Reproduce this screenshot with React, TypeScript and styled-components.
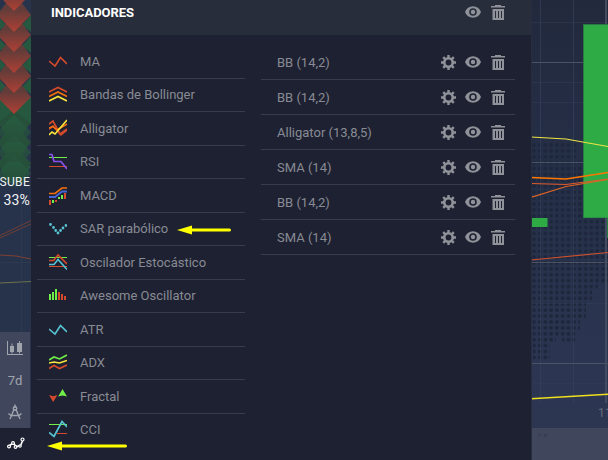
import React from "react";
import styled, { createGlobalStyle } from "styled-components";

const GlobalStyle = createGlobalStyle`
  * { box-sizing: border-box; }
  body { margin: 0; background: #1e2131; overflow: hidden; font-family: Roboto, sans-serif; }
  svg { display: block; flex: none; }
`;

const Screen = styled.div`
  position: relative;
  display: grid;
  grid-template-columns: 31px 500px 77px;
  width: 608px;
  height: 460px;
  overflow: hidden;
`;

const Sidebar = styled.aside`
  display: flex;
  flex-direction: column;
  height: 460px;
  position: relative;
  background: #27334b;
`;

const Sentiment = styled.div`
  position: absolute;
  top: 174px;
  right: 1px;
  text-align: right;
  color: #f1f2f4;
  white-space: nowrap;
`;
const SentimentLabel = styled.div`
  font-size: 12px;
  line-height: 16px;
  letter-spacing: 0.3px;
`;
const SentimentValue = styled.div`
  font-size: 14px;
  line-height: 20px;
  letter-spacing: 0.2px;
`;

const Tools = styled.nav`
  display: flex;
  flex-direction: column;
`;
const Tool = styled.button<{ $active?: boolean }>`
  display: flex;
  align-items: center;
  justify-content: center;
  width: ${(p) => (p.$active ? 31 : 30)}px;
  height: 32px;
  padding: 0;
  border: 0;
  font: 13px Roboto, sans-serif;
  color: ${(p) => (p.$active ? "#ffffff" : "#a0a4ad")};
  background: ${(p) => (p.$active ? "#1e2131" : "#40475d")};
`;

const Panel = styled.main`
  display: flex;
  flex-direction: column;
  background: #1e2131;
  color: #888b94;
  font-size: 13px;
`;
const Header = styled.header`
  display: flex;
  align-items: center;
  justify-content: space-between;
  height: 35px;
  padding: 0 25px 11px 20px;
  background: #282d3c;
`;
const Title = styled.h1`
  margin: 2px 0 0;
  font-size: 13px;
  line-height: 16px;
  font-weight: 700;
  letter-spacing: -0.05px;
  color: #fff;
`;
const Columns = styled.div`
  display: grid;
  grid-template-columns: 208px 254px;
  column-gap: 16px;
  padding: 10px 0 0 6px;
`;
const List = styled.ul`
  margin: 0;
  padding: 0;
  list-style: none;
`;
const IndicatorRow = styled.li`
  display: flex;
  align-items: center;
  gap: 13px;
  height: 34px;
  padding-left: 12px;
  border-bottom: 1px solid #383b49;
  &:nth-child(even) { height: 33px; padding-bottom: 1px; }
  &:last-child { border-bottom-color: transparent; }
`;
const ActiveRow = styled.li`
  display: flex;
  align-items: center;
  justify-content: space-between;
  height: 35px;
  padding: 0 9px 0 16px;
  border-bottom: 1px solid #383b49;
`;
const Actions = styled.div`
  display: flex;
  align-items: center;
  gap: 9px;
  color: #8f9299;
`;

const Chart = styled.section`
  height: 460px;
`;
const Annotation = styled.svg<{ $x: number; $y: number }>`
  position: absolute;
  left: ${(p) => p.$x}px;
  top: ${(p) => p.$y}px;
`;

const RED = "#d64a2c";
const ORANGE = "#f3700e";
const YELLOW = "#f8e63c";
const GREEN = "#70ef48";
const CYAN = "#57c4d4";
const BLUE = "#4467d8";
const PURPLE = "#8850ec";

const Line = ({ p, c, w = 1.6 }: { p: string; c: string; w?: number }) => (
  <polyline points={p} fill="none" stroke={c} strokeWidth={w} />
);

const zigzag = "0,9 6,14 11.5,5.5 18,12";

const glyphs: Record<string, React.ReactNode> = {
  ma: <Line p={zigzag} c={RED} />,
  bb: (
    <>
      <Line p="0,7 9,2.5 18,7" c={RED} />
      <Line p="0,11.5 9,7 18,11.5" c={ORANGE} />
      <Line p="0,16 9,11.5 18,16" c={YELLOW} />
    </>
  ),
  alligator: (
    <>
      <Line p="0,5 4,2 11,15 18,10" c={RED} />
      <Line p="0,10 4,7 12,16 18,11" c={RED} />
      <Line p="0,9 4,7.5 8,11 18,5" c={ORANGE} />
      <Line p="0,16 3,13 6,15 18,1" c={YELLOW} />
    </>
  ),
  rsi: (
    <>
      <path d="M0 5.5h18" stroke={GREEN} />
      <path d="M0 14.5h18" stroke={RED} />
      <Line p="0,2.5 3,2.5 5,9.5 12,9.5 18,17" c={PURPLE} w={1.7} />
    </>
  ),
  macd: (
    <>
      <Line p="0,7.5 6,7.5 13,2 18,2" c={ORANGE} />
      <Line p="0,11 6,11 13,5.5 18,5.5" c={BLUE} w={1.8} />
      <path d="M0 14h2v5H0zM6 14h2v2H6zM15 7h2v6h-2z" fill={RED} />
      <path d="M3 14h2v3H3zM9 11h2v2H9zM12 9h2v4h-2z" fill={GREEN} />
    </>
  ),
  sar: (
    <path
      d="M1.5 5.500h.01M4.500 8.500h.01M6.700 11.500h.01M9 14h.01M11.500 11.500h.01M14 9h.01M17 6.500h.01"
      stroke={CYAN}
      strokeWidth="2.800"
      strokeLinecap="round"
    />
  ),
  stochastic: (
    <>
      <path d="M0 4.500h18" stroke={GREEN} />
      <path d="M0 13.500h18" stroke={RED} />
      <Line p="0,7.5 4.5,7.5 9,2 18,11" c={RED} />
      <Line p="0,11.5 5,11.5 9,6.5 18,16.5" c={CYAN} />
    </>
  ),
  awesome: (
    <>
      <path d="M0 8h2v6H0zM3 6h2v8H3zM6 3h2v11H6z" fill={GREEN} />
      <path d="M9 6h2v8H9zM12 8h2v6h-2zM15 10h2v4h-2z" fill={RED} />
    </>
  ),
  atr: <Line p={zigzag} c={CYAN} />,
  adx: (
    <>
      <Line p="0,7 5,4 10.5,6 18,2" c={GREEN} />
      <Line p="0,10 5,9 10.5,10 18,7.5" c={YELLOW} />
      <Line p="0,15.5 5,12.5 10.5,15.5 18,12" c={RED} />
    </>
  ),
  fractal: (
    <>
      <path d="M0 8l4.2 1.2L8.4 8 4.2 15z" fill={RED} />
      <path d="M9.2 9.5L13.5 2l4.5 7.5-4.5-1z" fill={GREEN} />
    </>
  ),
  cci: (
    <>
      <path d="M0 4.500h18" stroke={GREEN} />
      <path d="M8 13.500h10" stroke={RED} />
      <Line p="0,12.5 5,16.5 13,1.5 18,7" c={CYAN} w={1.7} />
    </>
  ),
};

const indicators: [string, string][] = [
  ["ma", "MA"],
  ["bb", "Bandas de Bollinger"],
  ["alligator", "Alligator"],
  ["rsi", "RSI"],
  ["macd", "MACD"],
  ["sar", "SAR parabólico"],
  ["stochastic", "Oscilador Estocástico"],
  ["awesome", "Awesome Oscillator"],
  ["atr", "ATR"],
  ["adx", "ADX"],
  ["fractal", "Fractal"],
  ["cci", "CCI"],
];

const active = ["BB (14,2)", "BB (14,2)", "Alligator (13,8,5)", "SMA (14)", "BB (14,2)", "SMA (14)"];

const Gear = () => (
  <svg width="16" height="16" viewBox="0 0 16 16">
    <circle cx="8.500" cy="8.500" r="4.200" fill="none" stroke="currentColor" strokeWidth="2.600" />
    <path
      d="M8.500 1v3M8.500 13v3M1 8.500h3M13 8.500h3M3.200 3.200l2 2M11.800 11.800l2 2M3.200 13.800l2-2M11.800 5.200l2-2"
      stroke="currentColor"
      strokeWidth="2.400"
    />
  </svg>
);
const Eye = () => (
  <svg width="16" height="16" viewBox="0 0 16 16">
    <path
      fill="currentColor"
      fillRule="evenodd"
      d="M0 8C1.4 4.4 4.4 2.3 8 2.3S14.600 4.400 16 8c-1.400 3.600-4.400 5.700-8 5.700S1.400 11.600 0 8zm8-3.800a3.800 3.800 0 100 7.600 3.800 3.800 0 000-7.600zm0 1.600a2.200 2.200 0 110 4.400 2.200 2.200 0 010-4.400z"
    />
  </svg>
);
const Trash = () => (
  <svg width="16" height="16" viewBox="0 0 16 16">
    <path
      fill="currentColor"
      fillRule="evenodd"
      d="M5 1h6v1h4v1.500H1V2h4zM2.500 5h11.500v11H2.500zM5 7v7h1V7zM8 7v7h1V7zM11 7v7h1V7z"
    />
  </svg>
);

const CandlesIcon = () => (
  <svg width="18" height="16" viewBox="0 0 18 16" fill="currentColor">
    <path d="M1 1h1v13h15v1H1zM4 6h4v6H4zM5.500 3.500h1v10h-1zM11 3h5v9h-5zM13 1h1v12.500h-1z" />
  </svg>
);
const CompassIcon = () => (
  <svg width="16" height="16" viewBox="0 0 16 16" fill="none" stroke="currentColor" strokeWidth="1.400">
    <path d="M8 .5V4M7.200 5L3 15M8.800 5L13 15M1.500 9.500L4 11.500H12L14.500 9.500" />
    <circle cx="8" cy="4.500" r="1.700" />
  </svg>
);
const NodesIcon = () => (
  <svg width="18" height="14" viewBox="0 0 18 14" fill="none" stroke="currentColor" strokeWidth="1.600">
    <path d="M2 9L6 6 9.500 9.500 13.500 8.500 16 3" />
    <g fill="#1e2131" strokeWidth="1.200">
      <circle cx="2" cy="9.500" r="1.400" />
      <circle cx="6" cy="6" r="1.400" />
      <circle cx="8.500" cy="10" r="1.300" />
      <circle cx="13" cy="9" r="1.200" />
      <circle cx="15.500" cy="2.500" r="1.500" />
    </g>
  </svg>
);

const redTips = [114, 93, 73, 52, 32, 11];
const greenPeaks = [156, 135, 115];

const SentimentArt = () => (
  <svg width="31" height="332" viewBox="0 0 31 332">
    <defs>
      <linearGradient id="redFade" x1="0" y1="0" x2="0" y2="1">
        <stop offset="0.25" stopColor="#623c39" />
        <stop offset="1" stopColor="#b04034" />
      </linearGradient>
      <linearGradient id="greenFade" x1="0" y1="0" x2="0" y2="1">
        <stop offset="0" stopColor="#276243" />
        <stop offset="1" stopColor="#265039" />
      </linearGradient>
      <linearGradient id="glow" x1="0" y1="0" x2="0" y2="1">
        <stop offset="0" stopColor="#265a40" />
        <stop offset="1" stopColor="#27394a" />
      </linearGradient>
    </defs>
    <rect width="31" height="332" fill="#27334b" />
    <path d="M0 166h31L18 188H10z" fill="url(#glow)" />
    {[15, 36, 56, 77, 97].map((y) => (
      <path key={y} d={`M31 ${y}L22 ${y + 10} 31 ${y + 17}zM-3 ${y}L6 ${y + 10} -3 ${y + 17}z`} fill="#25583e" />
    ))}
    {greenPeaks.map((y) => (
      <path key={y} d={`M14 ${y - 10}L31 ${y + 7}L20 ${y + 22}H8L-3 ${y + 7}z`} fill="#265039" />
    ))}
    {greenPeaks.map((y) => (
      <path key={y} d={`M14 ${y}L31 ${y + 17}L23 ${y + 27}H5L-3 ${y + 17}z`} fill="url(#greenFade)" opacity=".7" />
    ))}
    <path d="M-3 97H31V124L14 110L-3 124z" fill="#25583e" />
    {redTips.map((y) => (
      <path key={y} d={`M14 ${y}L-3 ${y - 17} 7 ${y - 30}H21L31 ${y - 17}z`} fill="url(#redFade)" />
    ))}
    <path d="M0 235.500L31 220.500M0 238L31 224" stroke="#85402f" opacity=".8" />
    <path d="M0 255L16 256L31 259" fill="none" stroke="#803f31" />
    <path d="M0 283L31 281.500" stroke="#6d724c" />
    <path d="M0 262.500h31M21.500 190v142" stroke="#33405a" opacity=".5" />
  </svg>
);

const ChartArt = () => (
  <svg width="77" height="460" viewBox="531 0 77 460">
    <defs>
      <linearGradient id="sky" x1="0" y1="0" x2="0" y2="1">
        <stop offset="0" stopColor="#22293d" />
        <stop offset="0.5" stopColor="#26314a" />
        <stop offset="0.75" stopColor="#2b3551" />
        <stop offset="1" stopColor="#2e3651" />
      </linearGradient>
      <pattern id="dots" x="531" y="142" width="5.75" height="5.9" patternUnits="userSpaceOnUse">
        <circle cx="2.900" cy="2.900" r="2" fill="#1d263b" />
      </pattern>
    </defs>
    <rect x="531" width="77" height="460" fill="url(#sky)" />
    <path
      d="M531 142h46v18h31v123h-10v6h-6v12h-6v18h-6v12h-5v12h-13v-6h-6v6h-6v18h-17z"
      fill="url(#dots)"
    />
    <path d="M540.500 0v403M573.500 0v403" stroke="#35415a" opacity=".7" />
    <path d="M531 22.500h77M531 82.500h77M531 102.500h77M531 303.500h77M531 383.500h77" stroke="#34405a" opacity=".45" />
    <path d="M531 62.500h77M531 162.500h77M531 262.500h77M531 363.500h77" stroke="#4c5364" />
    <path d="M606 0v403" stroke="#424b60" strokeWidth="2" />
    <rect x="583" y="24" width="25" height="194" fill="#257b42" />
    <rect x="584" y="25" width="24" height="192.500" fill="#2eab44" />
    <rect x="531" y="218" width="16.500" height="9" fill="#2eab44" />
    <path d="M607.500 218v20" stroke="#257b42" />
    <g fill="none" strokeWidth="1.200">
      <path d="M531 137L566 139L608 146.500" stroke="#efe546" />
      <path d="M531 177.500L566 179L608 172.500" stroke="#ff7600" strokeWidth="1.500" />
      <path d="M531 183.500L566 184.500L608 179" stroke="#e05a2b" />
      <path d="M531 197.500L566 186.500L608 179.500" stroke="#df6525" />
      <path d="M531 260L608 252.500" stroke="#cf512e" />
      <path d="M531 398.800L608 394.300" stroke="#f0e01e" strokeWidth="1.600" />
    </g>
    <rect x="531" y="428" width="77" height="32" fill="#40475d" />
    <path d="M538 434h3l-1.500 2.500z" fill="#343a4a" />
    <circle cx="545.500" cy="435.500" r="1.200" fill="none" stroke="#343a4a" />
    <text x="598" y="417" fontFamily="Roboto" fontSize="12" fill="#666b7c">11</text>
    <path d="M531.500 0v460" stroke="#282e42" />
  </svg>
);

const Arrow = ({ x, y, w }: { x: number; y: number; w: number }) => (
  <Annotation $x={x} $y={y} width={w} height="10" viewBox={`0 0 ${w} 10`}>
    <path d="M0 5L15 .5V9.500z" fill="#ffff00" />
    <path d={`M13 5H${w - 1.5}`} stroke="#ffff00" strokeWidth="3" strokeLinecap="round" />
  </Annotation>
);

export default function App() {
  return (
    <>
      <GlobalStyle />
      <Screen>
        <Sidebar>
          <SentimentArt />
          <Sentiment>
            <SentimentLabel>SUBE</SentimentLabel>
            <SentimentValue>33%</SentimentValue>
          </Sentiment>
          <Tools>
            <Tool><CandlesIcon /></Tool>
            <Tool>7d</Tool>
            <Tool><CompassIcon /></Tool>
            <Tool $active><NodesIcon /></Tool>
          </Tools>
        </Sidebar>
        <Panel>
          <Header>
            <Title>INDICADORES</Title>
            <Actions><Eye /><Trash /></Actions>
          </Header>
          <Columns>
            <List>
              {indicators.map(([icon, name]) => (
                <IndicatorRow key={name}>
                  <svg width="18" height="19" viewBox="0 0 18 19">{glyphs[icon]}</svg>
                  {name}
                </IndicatorRow>
              ))}
            </List>
            <List>
              {active.map((name, i) => (
                <ActiveRow key={i}>
                  {name}
                  <Actions><Gear /><Eye /><Trash /></Actions>
                </ActiveRow>
              ))}
            </List>
          </Columns>
        </Panel>
        <Chart><ChartArt /></Chart>
        <Arrow x={177} y={225} w={54} />
        <Arrow x={47} y={441} w={80} />
      </Screen>
    </>
  );
}
